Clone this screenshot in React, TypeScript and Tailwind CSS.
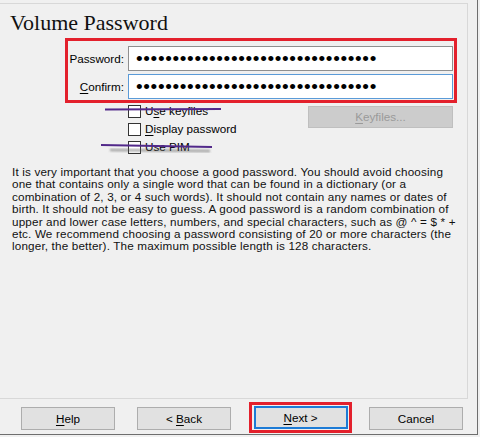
const UI_FONT = "font-['Liberation_Sans',Arial,sans-serif]";

const DOTS = '•'.repeat(33);

const helpText = [
  'It is very important that you choose a good password. You should avoid choosing',
  'one that contains only a single word that can be found in a dictionary (or a',
  'combination of 2, 3, or 4 such words). It should not contain any names or dates of',
  'birth. It should not be easy to guess. A good password is a random combination of',
  'upper and lower case letters, numbers, and special characters, such as @ ^ = $ * +',
  'etc. We recommend choosing a password consisting of 20 or more characters (the',
  'longer, the better). The maximum possible length is 128 characters.',
];

function PasswordField({ focused }: { focused?: boolean }) {
  return (
    <div
      className={
        'flex h-[25px] items-center bg-white pl-[7px] ' +
        (focused ? 'border border-[#5b9bd8]' : 'border border-[#8f8f8f]')
      }
    >
      <span className="text-[19px] leading-none tracking-[0.65px] text-black">{DOTS}</span>
    </div>
  );
}

function CheckRow({ children }: { children: React.ReactNode }) {
  return (
    <div className="flex h-[18px] items-center">
      <div className="h-[13px] w-[13px] border border-[#333333] bg-white" />
      <span className="ml-[4px] text-[11.7px] leading-none text-black">{children}</span>
    </div>
  );
}

function DlgButton({ children, focused }: { children: React.ReactNode; focused?: boolean }) {
  return (
    <div
      className={
        'flex h-[23px] w-[94px] items-center justify-center bg-[#e1e1e1] text-[11.7px] text-black ' +
        (focused ? 'border-2 border-[#1d7bd6]' : 'border border-[#adadad]')
      }
    >
      {children}
    </div>
  );
}

export default function App() {
  return (
    <div className={`relative flex h-[437px] w-[480px] overflow-hidden bg-[#f0f0f0] ${UI_FONT}`}>
      <div className="flex h-[435px] w-[478px] flex-col border-r border-b border-[#6e6e6e]">
        {/* wizard page */}
        <div className="mt-[3px] flex h-[396px] w-[468px] flex-col border-t border-r border-b border-[#d8d8d8]">
          <h1 className="mt-[6px] pl-[10px] font-['Liberation_Serif','Times_New_Roman',serif] text-[22px] leading-[26px] text-[#111]">
            Volume Password
          </h1>

          <div className="mt-[2px] ml-[65px] w-[392px] border-[3px] border-[#e3202c] pt-[5px] pb-[1px]">
            <div className="grid grid-cols-[56px_325px] items-center gap-x-[4px] gap-y-[3px]">
              <span className="text-right text-[11.7px] text-black">Password:</span>
              <PasswordField />
              <span className="text-right text-[11.7px] text-black">
                <u className="underline-offset-2">C</u>onfirm:
              </span>
              <PasswordField focused />
            </div>
          </div>

          <div className="mt-[-1px] flex">
            <div className="ml-[128px] flex w-[180px] flex-col">
              <CheckRow>
                U<u className="underline-offset-2">s</u>e keyfiles
              </CheckRow>
              <CheckRow>
                <u className="underline-offset-2">D</u>isplay password
              </CheckRow>
              <CheckRow>Use PIM</CheckRow>
            </div>
            <div className="mt-[4px] flex h-[22px] w-[145px] items-center justify-center border border-[#bfbfbf] bg-[#cccccc] text-[11.7px] text-[#9a9a9a]">
              <span>
                <u className="underline-offset-2">K</u>eyfiles...
              </span>
            </div>
          </div>

          <p className="mt-[10px] pl-[12px] text-[11.7px] leading-[12.4px] tracking-[0.16px] whitespace-nowrap text-[#111]">
            {helpText.map((line) => (
              <span key={line} className="block">
                {line}
              </span>
            ))}
          </p>
        </div>

        {/* button bar */}
        <div className="flex h-[35px] items-start">
          <div className="mt-[8px] ml-[21px]">
            <DlgButton>
              <span>
                <u className="underline-offset-2">H</u>elp
              </span>
            </DlgButton>
          </div>
          <div className="mt-[8px] ml-[22px]">
            <DlgButton>
              <span>
                &lt; <u className="underline-offset-2">B</u>ack
              </span>
            </DlgButton>
          </div>
          <div className="mt-[3px] ml-[18px] flex h-[31px] w-[103px] items-center justify-center border-[3px] border-[#e3202c]">
            <DlgButton focused>
              <span>
                <u className="underline-offset-2">N</u>ext &gt;
              </span>
            </DlgButton>
          </div>
          <div className="mt-[8px] ml-[17px]">
            <DlgButton>Cancel</DlgButton>
          </div>
        </div>
      </div>

      <svg className="pointer-events-none absolute top-0 left-0" width="480" height="437">
        <defs>
          <filter id="soft" x="-10%" y="-200%" width="120%" height="500%">
            <feGaussianBlur stdDeviation="1.2" />
          </filter>
        </defs>
        <line x1="112" y1="113" x2="218" y2="113" stroke="#555" strokeOpacity="0.5" strokeWidth="2.5" filter="url(#soft)" />
        <line x1="105" y1="109.5" x2="221" y2="109" stroke="#52298a" strokeWidth="2" />
        <line x1="110" y1="150" x2="210" y2="151" stroke="#555" strokeOpacity="0.5" strokeWidth="2.5" filter="url(#soft)" />
        <line x1="101" y1="145" x2="212" y2="147" stroke="#52298a" strokeWidth="2" />
      </svg>
    </div>
  );
}
